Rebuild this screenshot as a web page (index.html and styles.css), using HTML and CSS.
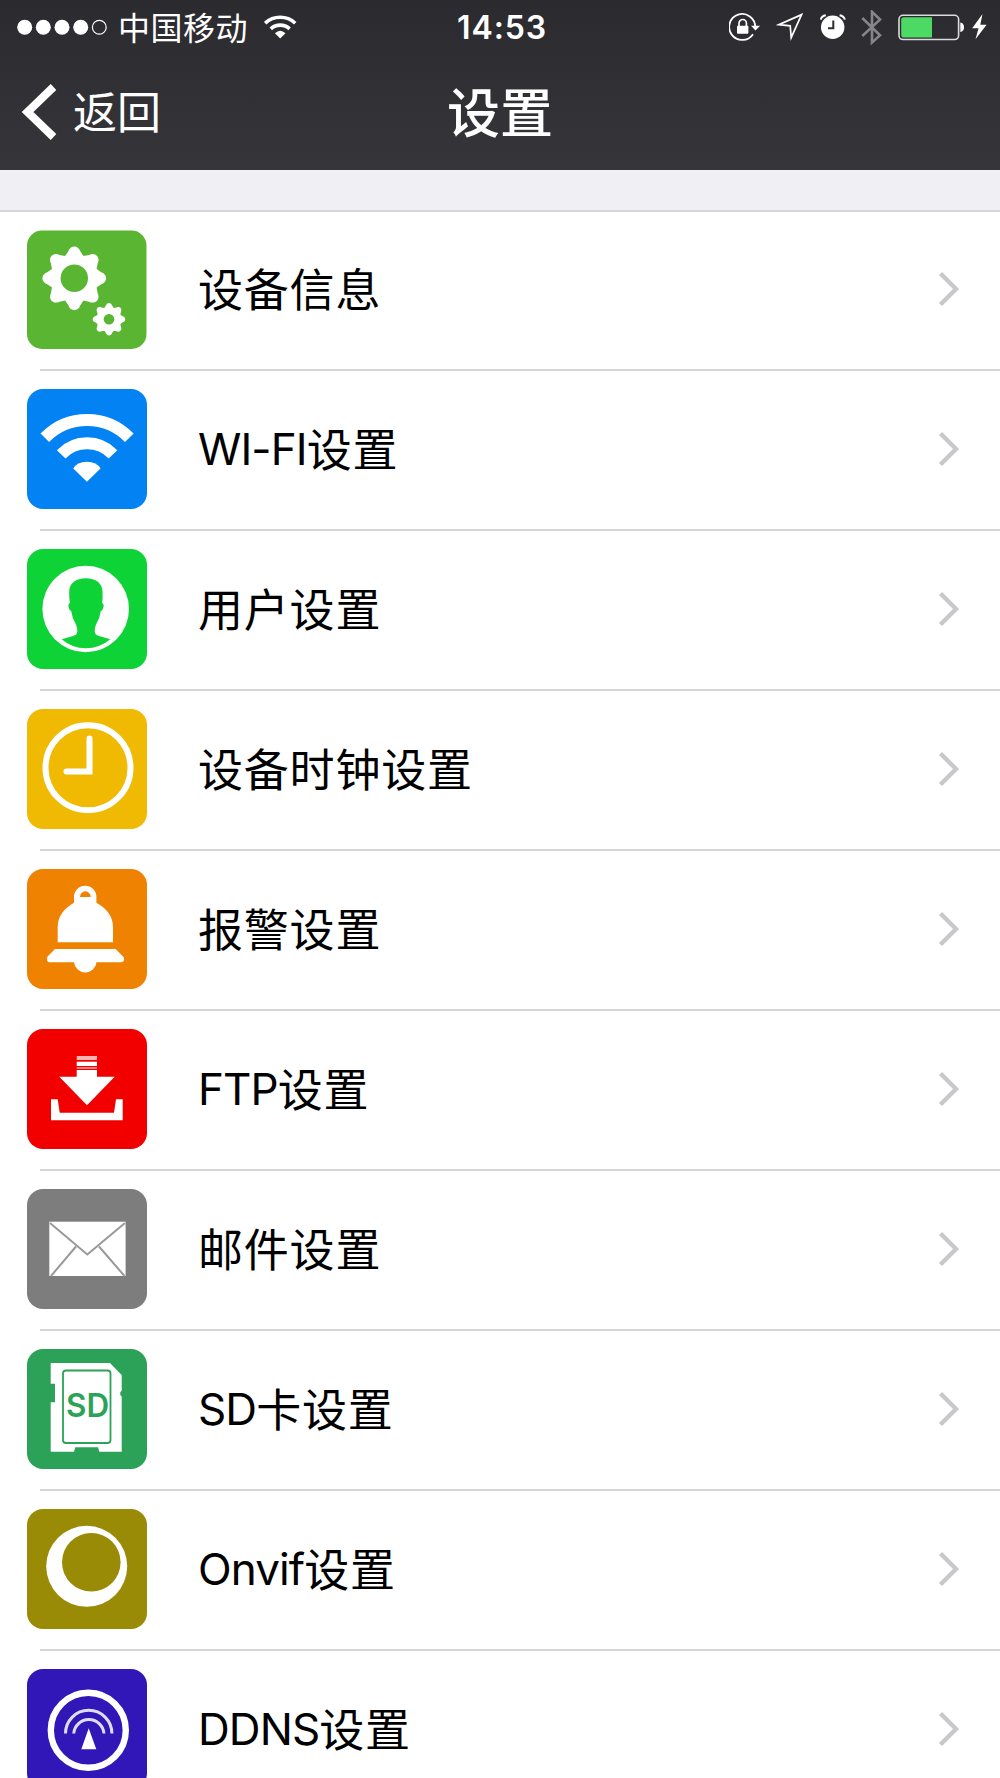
FILE: index.html
```html
<!DOCTYPE html>
<html lang="zh-CN">
<head>
    <meta charset="UTF-8">
    <meta name="viewport" content="width=device-width, initial-scale=1.0">
    <title>设置</title>

    <link rel="stylesheet" href="styles.css">
</head>
<body>
    <div class="page">
        <header class="header">
            <!-- 状态栏 -->
            <div class="status">
                <div class="statusLeft">
                    <svg class="signal" width="90" height="36" viewBox="0 0 90 36">
                        <g fill="#fff">
                            <circle cx="7.7" cy="17.3" r="7.5"/>
                            <circle cx="26.3" cy="17.3" r="7.5"/>
                            <circle cx="45" cy="17.3" r="7.5"/>
                            <circle cx="63.7" cy="17.3" r="7.5"/>
                        </g>
                        <circle cx="82.3" cy="17.3" r="6.9" fill="none" stroke="#fff" stroke-width="1.2"/>
                    </svg>
                    <span class="carrier">中国移动</span>
                    <svg width="33" height="36" viewBox="0 0 33 36">
                        <g fill="none" stroke="#fff" stroke-width="3.6">
                            <path d="M1.2 13.2A22 22 0 0 1 31.2 13.2"/>
                            <path d="M6.8 18.8A14 14 0 0 1 25.6 18.8"/>
                        </g>
                        <path d="M10.9 23.3Q16.2 18.3 21.5 23.3L16.2 28.6Z" fill="#fff"/>
                    </svg>
                </div>
                <div class="time">14:53</div>
                <div class="statusRight">
                    <!-- 方向锁定 -->
                    <svg width="31" height="36" viewBox="0 0 31 36">
                        <path d="M26.2 17A13 13 0 1 0 24 24.2" fill="none" stroke="#fff" stroke-width="1.8"/>
                        <path d="M22 15.8H31L26.5 20.6Z" fill="#fff"/>
                        <rect x="8" y="15.8" width="11.4" height="8" rx="1" fill="#fff"/>
                        <path d="M10 16V13.2A3.7 3.7 0 0 1 17.4 13.2V16" fill="none" stroke="#fff" stroke-width="1.7"/>
                    </svg>
                    <svg width="27" height="36" viewBox="0 0 27 36">
                        <path d="M25.6 4.6L2.8 14.6L14.2 15.8L15.2 27.6Z" fill="none" stroke="#fff" stroke-width="1.7"/>
                    </svg>
                    <!-- 闹钟 -->
                    <svg class="alarm" width="26" height="36" viewBox="0 0 26 36">
                        <circle cx="12.7" cy="17.3" r="11.7" fill="#fff"/>
                        <path d="M.8 9.6Q1.5 5.8 5.8 5.2M19.6 5.2Q24 5.8 24.8 9.6" fill="none" stroke="#fff" stroke-width="2"/>
                        <path d="M13.3 10.5V18.3H8" fill="none" stroke="#2d2c31" stroke-width="2"/>
                    </svg>
                    <svg width="21" height="36" viewBox="0 0 21 36">
                        <path d="M1.3 8L19 25.2L11 32.6V1.8L19 9.6L1.3 26" fill="none" stroke="#85858a" stroke-width="2.6"/>
                    </svg>
                    <svg width="66" height="36" viewBox="0 0 66 36">
                        <rect x="1" y="5.3" width="59.6" height="24.2" rx="4" fill="none" stroke="#dcdcde" stroke-width="1.6"/>
                        <path d="M6 7.3H34V27.6H6Q3.2 27.6 3.2 24.8V10.1Q3.2 7.3 6 7.3Z" fill="#4cd964"/>
                        <path d="M62.3 12.5Q66 13 66 17.3T62.3 22Z" fill="#fff"/>
                    </svg>
                    <svg class="bolt" width="15" height="36" viewBox="0 0 15 36">
                        <path d="M10.5 4L.2 18.2H6.5L3.5 29.2L14.6 14.8H8.3Z" fill="#fff"/>
                    </svg>
                </div>
            </div>

            <!-- 导航栏 -->
            <nav class="nav">
                <div class="back">
                    <svg width="36" height="58" viewBox="0 0 36 58">
                        <path d="M32.5 4L6.5 29L32.5 54" fill="none" stroke="#fff" stroke-width="8"/>
                    </svg>
                    <span>返回</span>
                </div>
                <h1 class="title">设置</h1>
            </nav>
        </header>

        <ul class="list">
            <li class="item">
                <svg class="icon" viewBox="0 0 120 120">
                    <defs>
                        <path id="tooth" d="M-13 -18Q-9 -22 -6 -27C-4 -33.5 4 -33.5 6 -27Q9 -22 13 -18Z"/>
                        <g id="gear">
                            <circle r="23"/>
                            <use href="#tooth"/>
                            <use href="#tooth" transform="rotate(45)"/>
                            <use href="#tooth" transform="rotate(90)"/>
                            <use href="#tooth" transform="rotate(135)"/>
                            <use href="#tooth" transform="rotate(180)"/>
                            <use href="#tooth" transform="rotate(225)"/>
                            <use href="#tooth" transform="rotate(270)"/>
                            <use href="#tooth" transform="rotate(315)"/>
                        </g>
                    </defs>
                    <rect y="1.5" width="119.5" height="118.5" rx="15" fill="#5ab532"/>
                    <use href="#gear" fill="#fff" transform="translate(47.3 49.3)"/>
                    <circle cx="47.3" cy="49.3" r="13.7" fill="#5ab532"/>
                    <use href="#gear" fill="#fff" transform="translate(82 90.3) scale(.51)"/>
                    <circle cx="82" cy="90.3" r="5.3" fill="#5ab532"/>
                </svg>
                <span class="label">设备信息</span>
                <svg class="arrow" viewBox="0 0 22 38"><path d="M2.5 3.5L18 19L2.5 34.5"/></svg>
            </li>
            <li class="item">
                <svg class="icon" viewBox="0 0 120 120">
                    <rect width="120" height="120" rx="16" fill="#0282f3"/>
                    <g fill="none" stroke="#fff" stroke-width="12">
                        <path d="M17.8 48.8A59 59 0 0 1 102.3 48.8"/>
                        <path d="M34.2 65.3A36 36 0 0 1 86 65.3"/>
                    </g>
                    <path d="M46.3 79.5Q50 72.7 59.9 72.7T73.5 79.5L59.9 92.7Z" fill="#fff"/>
                </svg>
                <span class="label"><span class="en">WI-FI</span>设置</span>
                <svg class="arrow" viewBox="0 0 22 38"><path d="M2.5 3.5L18 19L2.5 34.5"/></svg>
            </li>
            <li class="item">
                <svg class="icon" viewBox="0 0 120 120">
                    <rect width="120" height="120" rx="16" fill="#0ed337"/>
                    <circle cx="58.7" cy="60" r="43.3" fill="#fff"/>
                    <path d="M58.8 29.3C49 29.3 42.2 34 42.2 43Q42 49 43 54Q41 54.5 41.5 58Q42 61 44.2 62Q45 69 49 75.5Q50.5 79 50.3 82.5Q50 86 46 87L34.7 90.3Q45 99.3 58.8 99.3T83.3 90.3L72 87Q68 86 67.7 82.5Q67.5 79 69 75.5Q73 69 73.8 62Q76 61 76.5 58Q77 54.5 75 54Q76 49 75.5 43C75.5 34 68.6 29.3 58.8 29.3Z" fill="#0ed337"/>
                </svg>
                <span class="label">用户设置</span>
                <svg class="arrow" viewBox="0 0 22 38"><path d="M2.5 3.5L18 19L2.5 34.5"/></svg>
            </li>
            <li class="item">
                <svg class="icon" viewBox="0 0 120 120">
                    <rect width="120" height="120" rx="16" fill="#f0ba02"/>
                    <g fill="none" stroke="#fff" stroke-width="6">
                        <circle cx="61" cy="58.7" r="42.5"/>
                        <path d="M62.5 29.5V62.5H39.5" stroke-linecap="round"/>
                    </g>
                </svg>
                <span class="label">设备时钟设置</span>
                <svg class="arrow" viewBox="0 0 22 38"><path d="M2.5 3.5L18 19L2.5 34.5"/></svg>
            </li>
            <li class="item">
                <svg class="icon" viewBox="0 0 120 120">
                    <rect width="120" height="120" rx="16" fill="#f08202"/>
                    <g fill="#fff">
                        <path d="M47 33.7V28A11.2 11.2 0 0 1 69.4 28V33.7Q86 43 86 58V73.3H30.7V58Q30.7 43 47 33.7Z"/>
                        <path d="M28 80H88.7L96.5 88Q98.5 93.3 93.5 93.3H69.5A11.3 11.3 0 0 1 47 93.3H23Q18.5 93.3 20.5 87.5Z"/>
                    </g>
                    <path d="M53 28A5.3 5.6 0 0 1 63.7 28Z" fill="#f08202"/>
                </svg>
                <span class="label">报警设置</span>
                <svg class="arrow" viewBox="0 0 22 38"><path d="M2.5 3.5L18 19L2.5 34.5"/></svg>
            </li>
            <li class="item">
                <svg class="icon" viewBox="0 0 120 120">
                    <rect width="120" height="120" rx="16" fill="#f20000"/>
                    <g fill="#fff">
                        <rect x="49.7" y="27" width="20.3" height="4" opacity=".7"/>
                        <rect x="49.7" y="32.7" width="20.3" height="4.3"/>
                        <rect x="49.7" y="38" width="20.3" height="2" opacity=".5"/>
                        <path d="M49.7 41H70V47.7H87.7L60 76.3L32.3 47.7H49.7Z"/>
                        <path d="M24 70.3H30.7L32.7 83.7H87L89 70.3H95.7V91.3H24Z"/>
                    </g>
                </svg>
                <span class="label"><span class="en">FTP</span>设置</span>
                <svg class="arrow" viewBox="0 0 22 38"><path d="M2.5 3.5L18 19L2.5 34.5"/></svg>
            </li>
            <li class="item">
                <svg class="icon" viewBox="0 0 120 120">
                    <rect width="120" height="120" rx="16" fill="#7d7d7d"/>
                    <rect x="22.3" y="32.7" width="76.3" height="54.3" fill="#fff"/>
                    <path d="M23 34L60.3 65.5L98 34M49 57.5L24 87M72 57.5L97.5 87" fill="none" stroke="#999" stroke-width="2"/>
                </svg>
                <span class="label">邮件设置</span>
                <svg class="arrow" viewBox="0 0 22 38"><path d="M2.5 3.5L18 19L2.5 34.5"/></svg>
            </li>
            <li class="item">
                <svg class="icon" viewBox="0 0 120 120">
                    <rect width="120" height="120" rx="16" fill="#2ca258"/>
                    <path d="M23.7 14H83L94.7 26V41.7L93.3 43V46L94.7 47.5V102.7H72.3L71 98.3H48.3L47 102.7H23.7V53.3H28V34.7H23.7Z" fill="#fff"/>
                    <rect x="36" y="21.5" width="47.5" height="72.5" rx="3" fill="none" stroke="#2ca258" stroke-width="1.8"/>
                    <text class="sd" x="39" y="68" textLength="43" lengthAdjust="spacingAndGlyphs">SD</text>
                </svg>
                <span class="label"><span class="en">SD</span>卡设置</span>
                <svg class="arrow" viewBox="0 0 22 38"><path d="M2.5 3.5L18 19L2.5 34.5"/></svg>
            </li>
            <li class="item">
                <svg class="icon" viewBox="0 0 120 120">
                    <rect width="120" height="120" rx="16" fill="#998b06"/>
                    <circle cx="59.7" cy="57.3" r="40.5" fill="#fff"/>
                    <circle cx="64.3" cy="53.3" r="29.3" fill="#998b06"/>
                </svg>
                <span class="label"><span class="en">Onvif</span>设置</span>
                <svg class="arrow" viewBox="0 0 22 38"><path d="M2.5 3.5L18 19L2.5 34.5"/></svg>
            </li>
            <li class="item">
                <svg class="icon" viewBox="0 0 120 120">
                    <rect width="120" height="120" rx="16" fill="#3117b7"/>
                    <g fill="none" stroke="#fff">
                        <circle cx="61.3" cy="61.3" r="37.5" stroke-width="6.4"/>
                        <path d="M38.5 64.5A23.2 23.2 0 0 1 84.9 64.5" stroke-width="3" opacity=".85"/>
                        <path d="M46.7 64.5A15.2 15.2 0 0 1 77 64.5" stroke-width="3" opacity=".85"/>
                    </g>
                    <path d="M61.7 59.3L69.3 80.3H54.3Z" fill="#fff"/>
                </svg>
                <span class="label"><span class="en">DDNS</span>设置</span>
                <svg class="arrow" viewBox="0 0 22 38"><path d="M2.5 3.5L18 19L2.5 34.5"/></svg>
            </li>
        </ul>
    </div>
</body>
</html>
```

FILE: styles.css
```css
body {
    margin: 0;
    background-color: #efeff4;
    font-family: Inter, 'Noto Sans CJK SC', sans-serif;
}

.page {
    width: 1000px;
    height: 1778px;
    overflow: hidden;          /* 最后一行超出屏幕 */
}

/* 顶部 */
.header {
    height: 170px;
    background: linear-gradient(#2b2a2f, #363539);
    color: white;
}

.status {
    display: grid;
    grid-template-columns: 1fr auto 1fr;
    align-items: center;
    height: 56px;
    padding: 0 13px 0 17px;
}

.statusLeft,
.statusRight {
    display: flex;
    align-items: center;
}

.statusRight {
    justify-content: flex-end;
    gap: 16px;
}

.carrier {
    margin: 0 16px 4px 11px;
    font-family: 'Noto Sans CJK SC', sans-serif;
    font-size: 32px;
    letter-spacing: 0.5px;
    line-height: 36px;
}

.time {
    font-size: 32px;
    font-weight: 600;
    letter-spacing: 0.9px;
    line-height: 54px;
}

.alarm {
    margin-left: 1px;
    margin-right: -1px;
}

.bolt {
    margin-left: -8px;
}

/* 导航栏 */
.nav {
    display: grid;
    grid-template-columns: 1fr auto 1fr;
    align-items: center;
    height: 112px;
    padding: 0 21px;
}

.back {
    display: flex;
    align-items: center;
    gap: 16px;
    font-size: 44px;
    line-height: 60px;
}

.back span {
    padding-top: 2px;
}

.title {
    margin: 0;
    padding-top: 3px;
    font-size: 53px;
    font-weight: 500;
    line-height: 70px;
}

/* 设置列表 */
.list {
    margin: 40px 0 0;
    padding: 0;
    border-top: 2px solid #d6d5d9;
    background-color: white;
    list-style: none;
}

.item {
    display: flex;
    align-items: flex-start;
    height: 160px;
    padding: 18px 40px 0 27px;
    box-sizing: border-box;
    /* 分割线左侧缩进40px */
    background: linear-gradient(#d6d5d9, #d6d5d9) 40px 100% / 960px 2px no-repeat;
}

.item:first-child {
    height: 159px;
    padding-top: 17px;
}

.icon {
    width: 120px;
    height: 120px;
}

.label {
    flex: 1;
    margin-left: 51px;
    color: black;
    font-size: 45px;
    letter-spacing: 0.8px;
    line-height: 124px;
}

.en {
    font-size: 44px;
    letter-spacing: -0.9px;
    vertical-align: 2px;
    line-height: 1;
}

.arrow {
    width: 22px;
    height: 38px;
    margin-top: 41px;
    fill: none;
    stroke: #c7c7cc;
    stroke-width: 4.3;
}

.sd {
    fill: #2ca258;
    font-size: 32px;
    font-weight: 600;
}
```
